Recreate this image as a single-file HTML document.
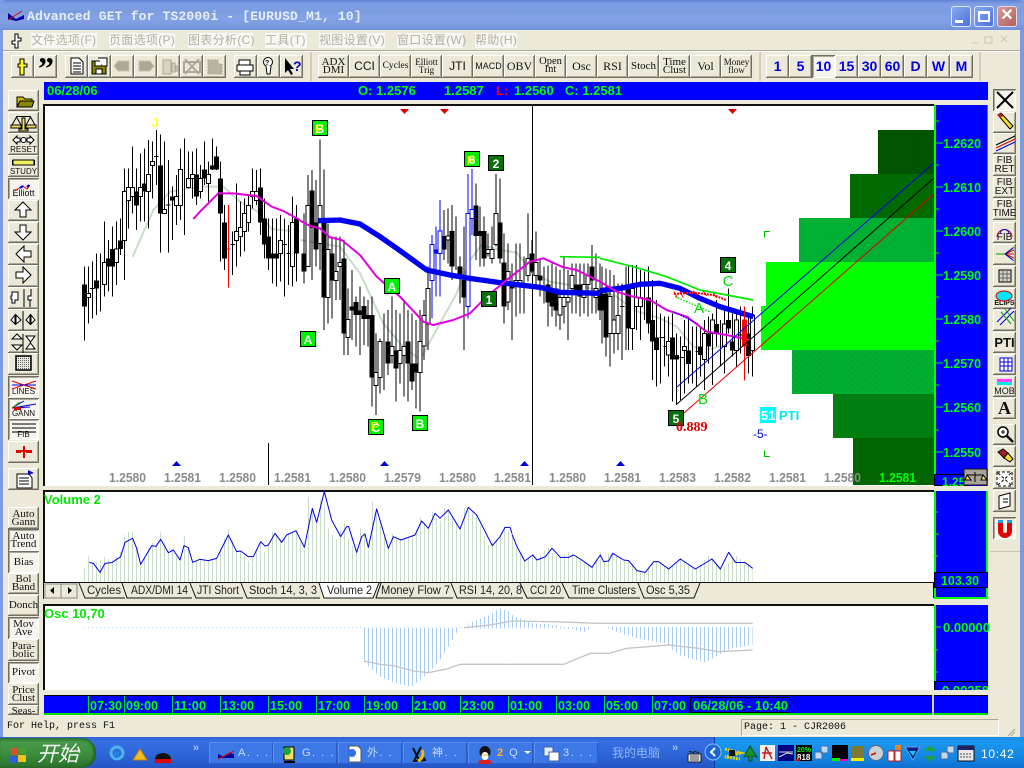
<!DOCTYPE html>
<html><head><meta charset="utf-8"><title>Advanced GET</title>
<style>
html,body{margin:0;padding:0;width:1024px;height:768px;overflow:hidden;background:#ece9d8}
body{position:relative;font-family:"Liberation Sans","Noto Sans CJK SC",sans-serif}
div{position:absolute;box-sizing:border-box}
.b{background:#ece9d8;box-shadow:inset -1px -1px #716f64,inset 1px 1px #fff,inset -2px -2px #aca899;display:flex;align-items:center;justify-content:center;text-align:center;font:10.5px/8px "Liberation Serif",serif;color:#111;white-space:pre-line;padding-bottom:1px}
.p{background:#f6f4ec;box-shadow:inset 1px 1px #716f64,inset -1px -1px #fff,inset 2px 2px #aca899}
.tf{font:bold 14px "Liberation Sans",sans-serif;color:#0000e0}
.m{top:33px;height:15px;font:12px/15px "Liberation Sans","Noto Sans CJK SC",sans-serif;color:#b4b0a0;background:#f8f7f3;white-space:nowrap;letter-spacing:.3px}
.s{font:bold 13px/18px "Liberation Sans",sans-serif;color:#00ff00;top:82px;white-space:nowrap}
.tk{top:742px;height:22px;width:64px;background:#3c78e6;border-radius:2px;box-shadow:inset 1px 1px #5a90f0,inset -1px -1px #2b5cc8;color:#c8dcff;font:11px/22px "Liberation Sans","Noto Sans CJK SC",sans-serif;white-space:nowrap;padding-left:29px;letter-spacing:1.5px}
svg{position:absolute;left:0;top:0}
</style></head><body>
<!-- frame -->
<div style="left:0;top:0;width:1024px;height:738px;background:#7a9be0"></div>
<div style="left:0;top:0;width:1024px;height:30px;background:linear-gradient(#5f83d8 0,#7f9fe4 4px,#7c9ce0 12px,#84a2e6 18px,#7a9ae0 26px,#6f90da 30px);border-radius:6px 6px 0 0"></div>
<div style="left:3px;top:30px;width:1017px;height:707px;background:#ece9d8"></div>
<div style="left:27px;top:8px;font:bold 13px/17px 'Liberation Mono',monospace;color:#e6ecfa;white-space:nowrap;letter-spacing:.17px">Advanced GET for TS2000i - [EURUSD_M1, 10]</div>
<!-- window buttons -->
<div style="left:951px;top:6px;width:20px;height:21px;background:linear-gradient(135deg,#8aa8ee,#4a72dc);border:1px solid #dfe7fa;border-radius:3px"></div>
<div style="left:955px;top:20px;width:8px;height:3px;background:#fff"></div>
<div style="left:974px;top:6px;width:20px;height:21px;background:linear-gradient(135deg,#8aa8ee,#4a72dc);border:1px solid #dfe7fa;border-radius:3px"></div>
<div style="left:978px;top:11px;width:12px;height:11px;border:2px solid #fff;border-top-width:3px"></div>
<div style="left:997px;top:6px;width:20px;height:21px;background:linear-gradient(135deg,#d89a9a,#b06060);border:1px solid #e8dce0;border-radius:3px;color:#fff;font:bold 16px/18px 'Liberation Sans';text-align:center">✕</div>
<!-- menu -->
<div class="m" style="left:31px;width:66px">文件选项(F)</div>
<div class="m" style="left:109px;width:66px">页面选项(P)</div>
<div class="m" style="left:188px;width:65px">图表分析(C)</div>
<div class="m" style="left:265px;width:42px">工具(T)</div>
<div class="m" style="left:319px;width:66px">视图设置(V)</div>
<div class="m" style="left:397px;width:66px">窗口设置(W)</div>
<div class="m" style="left:475px;width:42px">帮助(H)</div>
<div style="left:3px;top:50px;width:1017px;height:1px;background:#aca899"></div>
<div style="left:3px;top:51px;width:1017px;height:1px;background:#fff"></div>
<div style="left:310px;top:52px;width:2px;height:29px;background:#d0ccb8"></div>
<div style="left:759px;top:52px;width:2px;height:29px;background:#d0ccb8"></div>
<div style="left:979px;top:52px;width:2px;height:29px;background:#d0ccb8"></div>
<!-- top toolbar -->
<div class="b" style="left:11px;top:55px;width:23px;height:23px"></div><div class="b" style="left:34px;top:55px;width:23px;height:23px"></div>
<div class="b" style="left:65px;top:55px;width:23px;height:23px"></div><div class="b" style="left:88px;top:55px;width:23px;height:23px"></div>
<div class="b" style="left:111px;top:55px;width:23px;height:23px"></div><div class="b" style="left:134px;top:55px;width:23px;height:23px"></div>
<div class="b" style="left:157px;top:55px;width:23px;height:23px"></div><div class="b" style="left:180px;top:55px;width:23px;height:23px"></div>
<div class="b" style="left:203px;top:55px;width:23px;height:23px"></div>
<div class="b" style="left:234px;top:55px;width:23px;height:23px"></div><div class="b" style="left:257px;top:55px;width:23px;height:23px"></div><div class="b" style="left:280px;top:55px;width:23px;height:23px"></div>
<div class="b" style="left:318px;top:55px;width:31px;height:23px;font-size:11px">ADX
DMI</div>
<div class="b" style="left:349px;top:55px;width:31px;height:23px;font:12px 'Liberation Sans'">CCI</div>
<div class="b" style="left:380px;top:55px;width:31px;height:23px;font-size:9.5px">Cycles</div>
<div class="b" style="left:411px;top:55px;width:31px;height:23px;font-size:9px">Elliott
Trig</div>
<div class="b" style="left:442px;top:55px;width:31px;height:23px;font:12px 'Liberation Sans'">JTI</div>
<div class="b" style="left:473px;top:55px;width:31px;height:23px;font:9px 'Liberation Sans'">MACD</div>
<div class="b" style="left:504px;top:55px;width:31px;height:23px;font:12px 'Liberation Serif'">OBV</div>
<div class="b" style="left:535px;top:55px;width:31px;height:23px">Open
Int</div>
<div class="b" style="left:566px;top:55px;width:31px;height:23px;font:12px 'Liberation Serif'">Osc</div>
<div class="b" style="left:597px;top:55px;width:31px;height:23px;font:12px 'Liberation Serif'">RSI</div>
<div class="b" style="left:628px;top:55px;width:31px;height:23px;font-size:11px">Stoch</div>
<div class="b" style="left:659px;top:55px;width:31px;height:23px;font-size:11px">Time
Clust</div>
<div class="b" style="left:690px;top:55px;width:31px;height:23px;font:12px 'Liberation Serif'">Vol</div>
<div class="b" style="left:721px;top:55px;width:31px;height:23px;font-size:9px">Money
flow</div>
<div class="b tf" style="left:766px;top:55px;width:23px;height:23px">1</div><div class="b tf" style="left:789px;top:55px;width:23px;height:23px">5</div>
<div class="b p tf" style="left:812px;top:55px;width:23px;height:23px">10</div><div class="b tf" style="left:835px;top:55px;width:23px;height:23px">15</div>
<div class="b tf" style="left:858px;top:55px;width:23px;height:23px">30</div><div class="b tf" style="left:881px;top:55px;width:23px;height:23px">60</div>
<div class="b tf" style="left:904px;top:55px;width:23px;height:23px">D</div><div class="b tf" style="left:927px;top:55px;width:23px;height:23px">W</div><div class="b tf" style="left:950px;top:55px;width:23px;height:23px">M</div>
<!-- info bar -->
<div style="left:44px;top:82px;width:944px;height:18px;background:#0000ff"></div>
<div class="s" style="left:47px">06/28/06</div><div class="s" style="left:358px">O: 1.2576</div><div class="s" style="left:444px">1.2587</div>
<div class="s" style="left:496px;color:#ff0000">L:</div><div class="s" style="left:514px">1.2560</div><div class="s" style="left:565px">C: 1.2581</div>
<!-- left buttons -->
<div class="b" style="left:8px;top:90px;width:31px;height:21px"></div><div class="b" style="left:8px;top:112px;width:31px;height:21px"></div>
<div class="b" style="left:8px;top:133px;width:31px;height:22px;align-items:flex-end;font:8px/9px 'Liberation Sans'">RESET</div>
<div class="b" style="left:8px;top:155px;width:31px;height:22px;align-items:flex-end;font:8px/9px 'Liberation Sans'">STUDY</div>
<div class="b p" style="left:8px;top:178px;width:31px;height:21px;align-items:flex-end;font:9px/10px 'Liberation Sans'">Elliott</div>
<div class="b" style="left:8px;top:200px;width:31px;height:21px"></div><div class="b" style="left:8px;top:222px;width:31px;height:21px"></div>
<div class="b" style="left:8px;top:244px;width:31px;height:21px"></div><div class="b" style="left:8px;top:265px;width:31px;height:22px"></div>
<div class="b" style="left:8px;top:287px;width:31px;height:22px"></div><div class="b" style="left:8px;top:309px;width:31px;height:22px"></div>
<div class="b" style="left:8px;top:331px;width:31px;height:22px"></div><div class="b" style="left:8px;top:353px;width:31px;height:22px"></div>
<div class="b p" style="left:8px;top:376px;width:31px;height:21px;align-items:flex-end;font:8px/9px 'Liberation Sans'">LINES</div>
<div class="b p" style="left:8px;top:398px;width:31px;height:21px;align-items:flex-end;font:8px/9px 'Liberation Sans'">GANN</div>
<div class="b p" style="left:8px;top:419px;width:31px;height:21px;align-items:flex-end;font:8px/9px 'Liberation Sans'">FIB</div>
<div class="b" style="left:8px;top:441px;width:31px;height:22px"></div><div class="b" style="left:8px;top:468px;width:31px;height:22px"></div>
<div class="b" style="left:8px;top:507px;width:31px;height:22px;font-size:11px">Auto
Gann</div>
<div class="b p" style="left:8px;top:529px;width:31px;height:22px;font-size:11px">Auto
Trend</div>
<div class="b p" style="left:8px;top:551px;width:31px;height:22px;font-size:11px">Bias</div>
<div class="b" style="left:8px;top:573px;width:31px;height:21px;font-size:11px">Bol
Band</div>
<div class="b" style="left:8px;top:595px;width:31px;height:21px;font-size:11px">Donch</div>
<div class="b p" style="left:8px;top:617px;width:31px;height:22px;font-size:11px">Mov
Ave</div>
<div class="b" style="left:8px;top:639px;width:31px;height:22px;font-size:11px">Para-
bolic</div>
<div class="b p" style="left:8px;top:662px;width:31px;height:21px;font-size:11px">Pivot</div>
<div class="b" style="left:8px;top:683px;width:31px;height:22px;font-size:11px">Price
Clust</div>
<div class="b" style="left:8px;top:705px;width:31px;height:10px;overflow:hidden;align-items:flex-start;padding-top:2px;font-size:11px">Seas-</div>
<!-- right buttons -->
<div class="b p" style="left:993px;top:89px;width:23px;height:22px"></div><div class="b" style="left:993px;top:112px;width:23px;height:21px"></div>
<div class="b" style="left:993px;top:133px;width:23px;height:21px"></div>
<div class="b" style="left:993px;top:155px;width:23px;height:21px;font:10px/9px 'Liberation Sans'">FIB
RET</div>
<div class="b" style="left:993px;top:177px;width:23px;height:21px;font:10px/9px 'Liberation Sans'">FIB
EXT</div>
<div class="b" style="left:993px;top:199px;width:23px;height:21px;font:10px/9px 'Liberation Sans'">FIB
TIME</div>
<div class="b" style="left:993px;top:222px;width:23px;height:21px;font:10px/9px 'Liberation Sans';align-items:flex-end">FIB</div>
<div class="b" style="left:993px;top:244px;width:23px;height:21px"></div><div class="b" style="left:993px;top:266px;width:23px;height:21px"></div>
<div class="b" style="left:993px;top:288px;width:23px;height:21px;font:bold 7px/8px 'Liberation Sans';align-items:flex-end">ELIPS</div>
<div class="b" style="left:993px;top:310px;width:23px;height:21px"></div>
<div class="b" style="left:993px;top:332px;width:23px;height:21px;font:bold 13px 'Liberation Sans'">PTI</div>
<div class="b" style="left:993px;top:354px;width:23px;height:21px"></div>
<div class="b" style="left:993px;top:376px;width:23px;height:21px;font:9px/9px 'Liberation Sans';align-items:flex-end">MOB</div>
<div class="b" style="left:993px;top:398px;width:23px;height:21px;font:bold 18px 'Liberation Serif'">A</div>
<div class="b" style="left:993px;top:424px;width:23px;height:21px"></div><div class="b" style="left:993px;top:446px;width:23px;height:21px"></div>
<div class="b" style="left:993px;top:468px;width:23px;height:21px"></div><div class="b" style="left:993px;top:490px;width:23px;height:22px"></div>
<div class="b p" style="left:993px;top:517px;width:23px;height:22px"></div>
<div style="left:990px;top:551px;width:30px;height:1px;background:#c8c4b0"></div>
<!-- chart backgrounds -->
<div style="left:43px;top:104px;width:891px;height:382px;background:#fff;border-top:2px solid #111;border-left:2px solid #111"></div>
<div style="left:934px;top:105px;width:54px;height:381px;background:#0000ff;border-left:2px solid #00ff00;border-right:1px solid #00c000"></div>
<div style="left:43px;top:490px;width:891px;height:93px;background:#fff;border-top:2px solid #111;border-left:2px solid #111"></div>
<div style="left:934px;top:491px;width:54px;height:108px;background:#0000ff;border:solid #00ff00;border-width:0 2px 2px 2px"></div>
<div style="left:43px;top:604px;width:891px;height:86px;background:#fff;border-top:2px solid #111;border-left:2px solid #111"></div>
<div style="left:934px;top:605px;width:54px;height:85px;background:#0000ff;border-left:2px solid #00ff00"></div>
<div style="left:44px;top:695px;width:944px;height:20px;background:#0000ff;border-top:1px solid #000;border-bottom:2px solid #00e000"></div>
<div style="left:932px;top:695px;width:2px;height:20px;background:#d0d0c0"></div>
<!-- status -->
<div style="left:7px;top:720px;font:10px/14px 'Liberation Mono',monospace;color:#111;white-space:pre">For Help, press F1</div>
<div style="left:741px;top:719px;width:258px;height:17px;border:1px solid #aca899;border-right-color:#fff;border-bottom-color:#fff;font:10px/15px 'Liberation Mono',monospace;color:#111;padding-left:2px;white-space:pre">Page: 1 - CJR2006</div>
<!-- taskbar -->
<div style="left:0;top:737px;width:1024px;height:31px;background:linear-gradient(#2c61d0,#3870e4 12%,#2e66d8 55%,#2455c4)"></div>
<div style="left:714px;top:737px;width:310px;height:31px;background:linear-gradient(#1b8ee6,#1a96ee 20%,#1284e0 70%,#0f6fd0);border-left:1px solid #0a3c9c"></div>
<div style="left:0;top:738px;width:96px;height:30px;background:linear-gradient(#377f37,#46994a 15%,#3a8a3a 60%,#2a722c);border-radius:0 14px 14px 0;box-shadow:inset -2px 0 3px #1f5a22"></div>
<div style="left:37px;top:739px;font:italic 21px/28px 'WenQuanYi Zen Hei','Noto Sans CJK SC',sans-serif;color:#f4f4f4">开始</div>
<div class="tk" style="left:209px">A. . .</div><div class="tk" style="left:273px">G. . .</div><div class="tk" style="left:338px">外. .</div><div class="tk" style="left:403px">神. .</div>
<div class="tk" style="left:468px;width:65px;overflow:hidden"><span style="color:#ffb030;font-weight:bold">2</span> Q</div>
<div class="tk" style="left:534px">3. . .</div>
<div style="left:612px;top:744px;font:12px/18px 'Noto Sans CJK SC',sans-serif;color:#8fb4f0;white-space:nowrap">我的电脑</div>
<div style="left:672px;top:741px;font:bold 11px/14px 'Liberation Sans';color:#9ec0f5">»</div>
<div style="left:193px;top:741px;font:bold 11px/14px 'Liberation Sans';color:#9ec0f5">»</div>
<div style="left:981px;top:745px;font:12px/18px 'Liberation Sans';color:#fff;letter-spacing:.7px">10:42</div>

<svg width="1024" height="768" xmlns="http://www.w3.org/2000/svg" font-family="Liberation Sans">
<defs>
<pattern id="vb" patternUnits="userSpaceOnUse" x="0" width="12" height="12"><rect x="0" width="3" height="12" fill="#c6dcc6"/></pattern>
<pattern id="ob" patternUnits="userSpaceOnUse" x="0" width="12" height="12"><rect x="0" width="3" height="12" fill="#a8ccf4"/></pattern>
<pattern id="d1" patternUnits="userSpaceOnUse" width="7" height="6"><rect width="7" height="6" fill="#00ac30"/><rect x="1" y="1" width="1" height="1" fill="#12b83e"/><rect x="4" y="4" width="1" height="1" fill="#12b83e"/></pattern>
<pattern id="d2" patternUnits="userSpaceOnUse" width="9" height="8"><rect width="9" height="8" fill="#005400"/><rect x="2" y="2" width="1" height="1" fill="#106810"/></pattern>
<pattern id="d3" patternUnits="userSpaceOnUse" width="9" height="8"><rect width="9" height="8" fill="#006a00"/><rect x="2" y="2" width="1" height="1" fill="#107a10"/></pattern>
<pattern id="gd" patternUnits="userSpaceOnUse" width="2" height="2"><rect width="2" height="2" fill="#e8e8e0"/><rect width="1" height="1" fill="#666"/></pattern>
</defs>
<!-- volume profile -->
<rect x="878" y="130" width="56" height="44" fill="url(#d2)"/>
<rect x="850" y="174" width="84" height="44" fill="url(#d3)"/>
<rect x="799" y="218" width="135" height="44" fill="#00b033"/>
<rect x="766" y="262" width="168" height="88" fill="#00ff00"/>
<rect x="761" y="306" width="6" height="44" fill="#00ff00"/>
<rect x="792" y="350" width="142" height="44" fill="url(#d1)"/>
<rect x="833" y="394" width="101" height="44" fill="#007f10"/>
<rect x="853" y="438" width="81" height="47" fill="#006400"/>
<!-- vertical lines -->
<path d="M532.5 105V485M268.5 443V485" stroke="#000" fill="none"/>
<!-- red/blue triangles -->
<path d="M400 109h9l-4.500 5zM440 109h9l-4.500 5zM728 109h9l-4.500 5z" fill="#e00000"/>
<path d="M172 466h9l-4.500-5zM380 466h9l-4.500-5zM520 466h9l-4.500-5zM616 466h9l-4.500-5z" fill="#0000e0"/>

<!-- MA lines underlay: zoom coordinates -->
<g transform="translate(0,85) scale(.33333)" fill="none">
<path d="M398 515L460 375 510 320 600 305 670 305 720 350 770 378 815 432 900 440" stroke="#c8dcc8" stroke-width="6"/>
</g>
<g transform="translate(300,100) scale(.33333)" fill="none">
<path d="M0 420L60 430 120 440 180 520 250 670 300 730 360 780 420 670 470 580 510 480 545 435 600 450 650 458 700 520 750 545 810 555 900 570" stroke="#c8dcc8" stroke-width="6"/>
</g>
<g transform="translate(600,100) scale(.33333)" fill="none">
<path d="M0 570L50 590 100 630 180 655 230 680 280 740 330 748 390 730" stroke="#c8dcc8" stroke-width="6"/>
</g>

<!-- candles -->
<g transform="translate(0,85) scale(.33333)" shape-rendering="crispEdges" fill="none">
<path stroke="#000" stroke-width="3" d="M253 545V767M265 545V715M277 530V700M289 505V690M301 505V680M313 410V635M325 465V620M337 425V635M349 410V600M361 400V510M373 250V585M385 250V430M397 185V385M409 250V435M421 205V410M433 190V410M445 165V430M457 170V340M469 135V300M481 148V503M493 170V385M505 225V503M517 305V465M529 270V420M541 190V405M553 160V450M565 200V310M577 200V340M589 190V360M601 240V340M613 170V300M625 230V350M637 160V255M649 185V255M661 230V530M673 360V555M697 440V570M709 295V545M721 350V515M733 340V500M745 330V440M757 250V370M769 255V360M781 250V450M793 340V520M805 400V555M817 400V595M829 400V605M841 390V590M853 400V635M865 420V600M877 335V605M889 360V590M270 610h14M462 214h14M498 360h14M691 478h14M847 478h14M859 505h14"/>
<path stroke="#000" stroke-width="15" d="M253 598V665M289 586V610M325 520V545M337 492V545M361 466V492M409 320V362M433 295V320M481 241V385M517 334V347M589 268V334M613 253V280M637 241V253M649 214V253M661 280V385M673 412V520M781 308V412M793 400V478M805 454V520M817 505V520M829 505V520M889 400V505"/>
<path stroke="#000" stroke-width="3" fill="#fff" d="M259 625h12V637h-12zM307 532h12V598h-12zM343 492h12V532h-12zM367 320h12V466h-12zM379 308h12V346h-12zM391 308h12V334h-12zM415 308h12V334h-12zM439 268h12V320h-12zM451 229h12V241h-12zM487 373h12V385h-12zM523 334h12V361h-12zM535 253h12V361h-12zM559 280h12V308h-12zM571 268h12V280h-12zM595 280h12V320h-12zM619 268h12V296h-12zM703 440h12V466h-12zM715 428h12V455h-12zM727 385h12V440h-12zM739 361h12V412h-12zM751 320h12V334h-12zM763 320h12V346h-12zM835 466h12V505h-12zM871 412h12V544h-12z"/>
<path stroke="#f00" stroke-width="3" d="M685 360V608M679 492h12"/>
</g>
<g transform="translate(300,100) scale(.33333)" shape-rendering="crispEdges" fill="none">
<path stroke="#000" stroke-width="3" d="M12 340V550M24 225V500M36 210V540M48 240V500M60 118V510M72 208V690M84 370V670M96 410V655M108 410V600M120 410V600M132 420V765M144 565V765M156 510V720M168 590V740M180 560V765M192 590V735M204 600V740M216 590V920M228 700V945M240 715V880M252 640V870M264 630V825M276 590V790M288 630V905M300 640V850M312 605V890M324 630V905M336 640V870M348 660V925M360 630V935M372 600V780M384 500V750M432 330V480M444 325V490M456 315V540M468 350V510M480 470V610M492 380V750M528 250V480M540 320V500M552 350V500M564 400V470M576 380V490M588 222V440M600 235V490M612 400V670M624 430V630M636 490V720M648 430V650M660 430V640M672 470V640M684 340V545M696 420V520M708 395V555M720 480V590M732 500V610M744 497V680M756 490V650M768 500V680M780 510V690M792 470V670M804 510V720M816 490V640M828 490V640M840 490V650M852 490V640M864 490V650M876 435V640M888 460V640M900 490V660"/>
<path stroke="#000" stroke-width="15" d="M12 460V515M36 272V384M48 368V448M72 368V593M96 460V542M132 475V700M156 620V632M168 606V645M180 632V645M192 618V657M204 645V657M216 645V832M264 724V790M288 752V806M324 724V790M336 790V844M348 790V818M432 408V448M456 393V500M480 500V527M492 540V592M528 316V408M540 393V408M552 393V475M600 367V475M612 487V620M636 548V566M696 460V515M720 527V541M744 553V608M756 566V620M768 566V632M828 553V580M840 553V590M876 500V541M900 570V632"/>
<path stroke="#000" stroke-width="3" fill="#fff" d="M18 316h12V500h-12zM54 316h12V430h-12zM78 448h12V593h-12zM102 515h12V542h-12zM114 488h12V500h-12zM138 658h12V712h-12zM222 817h12V856h-12zM234 724h12V832h-12zM270 740h12V766h-12zM294 752h12V790h-12zM306 740h12V766h-12zM354 724h12V818h-12zM366 646h12V738h-12zM378 565h12V672h-12zM438 408h12V420h-12zM558 448h12V460h-12zM570 448h12V475h-12zM582 340h12V433h-12zM618 515h12V606h-12zM642 542h12V553h-12zM654 542h12V553h-12zM678 475h12V527h-12zM702 487h12V527h-12zM774 592h12V645h-12zM786 592h12V620h-12zM798 592h12V606h-12zM810 527h12V566h-12zM846 553h12V592h-12zM858 527h12V553h-12zM882 566h12V592h-12z"/>
<path stroke="#0000f0" stroke-width="3" fill="#fff" d="M396 405V655M408 380V590M420 300V590M504 222V655M516 207V405"/>
<path stroke="#0000f0" stroke-width="3" fill="#fff" d="M390 433h12V541h-12zM414 393h12V460h-12zM498 340h12V620h-12zM510 328h12V355h-12z"/>
<path fill="#0000f0" d="M402 448h12V460h-12z"/>
</g>
<g transform="translate(600,100) scale(.33333)" shape-rendering="crispEdges" fill="none">
<path stroke="#000" stroke-width="3" d="M6 500V730M18 505V770M30 510V800M42 525V760M54 550V750M66 550V780M78 500V750M85 495V750M97 495V750M110 495V690M122 510V720M134 515V660M146 500V700M158 540V840M170 600V860M182 640V850M194 650V800M206 650V830M218 640V905M230 700V915M242 710V900M254 660V880M266 650V850M278 680V850M290 680V860M302 680V830M314 660V870M326 650V790M338 640V855M350 600V740M362 660V800M374 620V820M386 565V700M398 640V770M410 630V800M422 620V760M446 640V820M458 620V830M60 620h14M178 712h14M190 740h14M238 772h14M286 755h14M416 705h14"/>
<path stroke="#000" stroke-width="15" d="M6 580V632M18 580V712M85 565V685M146 592V670M158 660V725M170 712V750M218 712V778M230 765V778M266 752V792M302 740V765M326 700V740M350 672V700M386 660V685M398 725V752M446 700V768"/>
<path stroke="#000" stroke-width="3" fill="#fff" d="M24 590h12V700h-12zM36 660h12V700h-12zM48 646h12V700h-12zM91 565h12V685h-12zM104 592h12V620h-12zM116 592h12V620h-12zM200 725h12V765h-12zM248 740h12V752h-12zM308 700h12V778h-12zM332 660h12V700h-12zM368 672h12V740h-12zM404 660h12V752h-12zM452 646h12V752h-12z"/>
</g>
<!-- MA lines -->
<g transform="translate(300,100) scale(.33333)" fill="none" stroke-linejoin="round">
<path stroke="#0000f0" stroke-width="16" d="M55 362L120 360 180 372 240 410 300 452 380 510 450 525 510 535 600 548 720 562 780 577 900 580"/>
<path stroke="#e000e0" stroke-width="6" d="M0 362L30 378 60 385 90 412 125 420 180 465 230 530 300 590 370 665 400 675 460 660 510 640 560 590 620 540 690 485 730 475 790 502 830 510 900 545"/>
<path stroke="#00e800" stroke-width="5" d="M780 470L900 472"/>
</g>
<g transform="translate(0,85) scale(.33333)" fill="none">
<path stroke="#e000e0" stroke-width="6" d="M580 402L600 380 630 350 655 325 700 325 770 333 815 365 850 378 900 405"/>
</g>
<g transform="translate(600,100) scale(.33333)" fill="none" stroke-linejoin="round">
<path stroke="#0000f0" stroke-width="16" d="M0 572L60 565 120 553 180 550 240 565 300 595 360 620 420 638 460 650"/>
<path stroke="#e000e0" stroke-width="6" d="M0 545L50 575 100 590 150 600 200 630 260 650 320 695 380 705 450 720"/>
<path stroke="#00e800" stroke-width="5" d="M0 475L100 500 200 530 300 570 380 585 460 600"/>
<path stroke="#f00" stroke-width="6" stroke-dasharray="6 3" d="M222 582L280 578 340 585 378 600"/>
<path stroke="#f00" stroke-width="3" d="M222 575l10 18M240 575l10 18M280 572l10 14M310 574l10 14M340 580l10 14"/>
<path stroke="#00e800" stroke-width="4" stroke-dasharray="5 4" d="M225 590L330 635"/>
<path stroke="#0000f0" stroke-width="3" stroke-dasharray="5 3" d="M220 635L295 672"/>
<path stroke="#f00" stroke-width="15" d="M434 658V740" shape-rendering="crispEdges"/>
<path stroke="#f00" stroke-width="3" d="M434 620V842" shape-rendering="crispEdges"/>
</g>
<!-- regression lines -->
<path d="M677 387L934 163" stroke="#0000e0" fill="none"/>
<path d="M677 404L934 178" stroke="#000" fill="none"/>
<path d="M676 420L934 194" stroke="#e00000" fill="none"/>
<!-- label boxes -->
<g font-weight="bold" font-size="12" text-anchor="middle" fill="#fff" stroke-width="1">
<g stroke="#000"><rect x="300.500" y="331.500" width="15" height="15" fill="#00f000"/><rect x="384.500" y="278.500" width="15" height="15" fill="#00f000"/><rect x="312.500" y="120.500" width="15" height="15" fill="#00f000"/><rect x="368.500" y="419.500" width="15" height="15" fill="#00f000"/><rect x="412.500" y="415.500" width="15" height="15" fill="#00f000"/><rect x="464.500" y="151.500" width="15" height="15" fill="#00f000"/><rect x="488.500" y="155.500" width="15" height="15" fill="#0a700a"/><rect x="481.500" y="291.500" width="15" height="15" fill="#0a700a"/><rect x="720.500" y="257.500" width="15" height="15" fill="#0a700a"/><rect x="668.500" y="410.500" width="15" height="15" fill="#0a700a"/></g>
<text x="308" y="344">A</text><text x="392" y="291">A</text><text x="320" y="133">B</text><text x="376" y="432">C</text><text x="420" y="428">B</text><text x="472" y="164">6</text><text x="496" y="168">2</text><text x="489" y="304">1</text><text x="728" y="270">4</text><text x="676" y="423">5</text>
<g fill="#ffff00" font-weight="normal" font-size="13"><text x="155" y="127" stroke="none">J</text><text x="319" y="134">P</text><text x="375" y="431">P</text><text x="471" y="165">P</text></g>
<g fill="#00e000" font-weight="normal" font-size="15"><text x="728" y="286">C</text><text x="699" y="313">A</text><text x="703" y="404">B</text></g>
</g>
<text x="676" y="431" fill="#e00000" font-family="Liberation Serif" font-weight="bold" font-size="14">0.889</text>
<rect x="760" y="407" width="16" height="16" fill="#00ffff"/>
<text x="761" y="420" fill="#fff" font-weight="bold" font-size="13">51</text>
<text x="779" y="420" fill="#00e8e8" font-weight="bold" font-size="13">PTI</text>
<text x="753" y="438" fill="#0000d0" font-size="12">-5-</text>
<path d="M770 231.500h-5.500v6M770 456.500h-5.500v-6" stroke="#00c000" fill="none"/>
<!-- bottom price labels -->
<g font-weight="bold" font-size="13" fill="#8a8a8a">
<text x="109" y="482" textLength="37" lengthAdjust="spacingAndGlyphs">1.2580</text><text x="164" y="482" textLength="37" lengthAdjust="spacingAndGlyphs">1.2581</text><text x="219" y="482" textLength="37" lengthAdjust="spacingAndGlyphs">1.2580</text><text x="274" y="482" textLength="37" lengthAdjust="spacingAndGlyphs">1.2581</text><text x="329" y="482" textLength="37" lengthAdjust="spacingAndGlyphs">1.2580</text><text x="384" y="482" textLength="37" lengthAdjust="spacingAndGlyphs">1.2579</text><text x="439" y="482" textLength="37" lengthAdjust="spacingAndGlyphs">1.2580</text><text x="494" y="482" textLength="37" lengthAdjust="spacingAndGlyphs">1.2581</text><text x="549" y="482" textLength="37" lengthAdjust="spacingAndGlyphs">1.2580</text><text x="604" y="482" textLength="37" lengthAdjust="spacingAndGlyphs">1.2581</text><text x="659" y="482" textLength="37" lengthAdjust="spacingAndGlyphs">1.2583</text><text x="714" y="482" textLength="37" lengthAdjust="spacingAndGlyphs">1.2582</text><text x="769" y="482" textLength="37" lengthAdjust="spacingAndGlyphs">1.2581</text><text x="824" y="482" textLength="37" lengthAdjust="spacingAndGlyphs">1.2580</text><text x="879" y="482" textLength="37" lengthAdjust="spacingAndGlyphs" fill="#00ff00">1.2581</text>
</g>
<!-- right axis labels -->
<g font-weight="bold" font-size="13" fill="#00ff00">
<text x="943" y="148" textLength="38" lengthAdjust="spacingAndGlyphs">1.2620</text><text x="943" y="192" textLength="38" lengthAdjust="spacingAndGlyphs">1.2610</text><text x="943" y="236" textLength="38" lengthAdjust="spacingAndGlyphs">1.2600</text><text x="943" y="280" textLength="38" lengthAdjust="spacingAndGlyphs">1.2590</text><text x="943" y="324" textLength="38" lengthAdjust="spacingAndGlyphs">1.2580</text><text x="943" y="368" textLength="38" lengthAdjust="spacingAndGlyphs">1.2570</text><text x="943" y="412" textLength="38" lengthAdjust="spacingAndGlyphs">1.2560</text><text x="943" y="457" textLength="38" lengthAdjust="spacingAndGlyphs">1.2550</text>
</g>
<path d="M936 143h7M936 187h7M936 231h7M936 275h7M936 319h7M936 363h7M936 407h7M936 452h7M936 121h3M936 165h3M936 209h3M936 253h3M936 297h3M936 341h3M936 385h3M936 430h3M936 534h3M936 512h2M936 556h2M936 627h5M936 650h2M936 672h2" stroke="#00ff00" fill="none"/>
<rect x="934.500" y="474.500" width="32" height="11" fill="#0000ff" stroke="#000"/>
<text x="942" y="486" font-weight="bold" font-size="12" fill="#00ff00">1.25</text>
<rect x="964" y="469" width="23" height="16" fill="#a8a498" stroke="#111"/>
<path d="M967 475h16M975 472v10M967 475l-2 5h6zM983 475l-2 5h6z" stroke="#000" fill="#f0e060"/>

<!-- Volume panel -->
<g transform="translate(0,485) scale(.33333)" shape-rendering="crispEdges">
<path fill="url(#vb)" d="M252 292V255L265 212 280 235 300 225 315 215 335 230 362 200 375 142 398 140 410 190 422 238 455 170 468 184 482 140 505 203 520 195 540 235 552 150 565 188 578 232 600 220 625 227 650 220 685 132 710 200 722 198 745 228 760 215 782 170 795 205 805 180 818 138 845 172 860 150 888 135 913 197 925 32 950 112 966 18 985 130 1010 165 1033 108 1046 165 1070 202 1080 128 1095 147 1105 205 1117 48 1165 190 1177 145 1203 165 1245 150 1261 96 1285 130 1297 80 1320 112 1333 68 1357 90 1380 132 1393 68 1430 90 1465 182 1500 155 1513 127 1536 145V292z"/>
</g>
<g transform="translate(512,485) scale(.33333)" shape-rendering="crispEdges">
<path fill="url(#vb)" d="M0 292V148L15 195 38 228 62 210 75 225 108 182 120 205 145 217 170 200 205 222 240 247 265 200 275 230 290 205 302 205 335 225 350 227 375 257 400 262 425 230 440 230 470 252 505 222 550 252 590 212 625 252 660 225 672 212 700 233 722 250V292z"/>
</g>
<g transform="translate(0,485) scale(.33333)" fill="none"><path stroke="#0000e0" stroke-width="3" stroke-linejoin="round" d="M268 232L280 235 300 262 315 235 335 233 362 215 375 172 398 160 410 190 422 238 455 182 468 184 482 163 505 203 520 195 540 225 552 182 565 188 578 232 600 223 625 227 650 220 685 150 710 200 722 198 745 215 760 215 782 170 795 183 805 180 825 145 845 172 860 150 888 137 913 187 937 70 950 112 973 20 995 105 1022 155 1040 125 1046 125 1070 202 1085 155 1095 147 1105 187 1130 72 1165 190 1180 155 1203 165 1245 150 1265 108 1285 130 1305 85 1320 100 1345 75 1380 132 1405 67 1430 90 1477 182 1500 155 1515 127 1530 127 1536 145"/></g>
<g transform="translate(512,485) scale(.33333)" fill="none"><path stroke="#0000e0" stroke-width="3" stroke-linejoin="round" d="M0 148L15 185 38 228 62 210 75 225 100 215 120 190 145 217 170 217 185 210 205 222 240 247 265 210 275 230 290 228 302 205 335 225 350 227 375 257 400 262 425 230 440 230 470 252 505 222 550 252 600 222 625 252 650 202 670 232 700 233 722 250"/></g>
<text x="44" y="504" font-weight="bold" font-size="13" fill="#00e800">Volume 2</text>
<!-- Tabs -->
<rect x="45" y="583" width="888" height="15" fill="#ece9d8"/>
<path d="M44 582.500H933.500V598" stroke="#111" fill="none"/>
<path d="M43.500 583V599" stroke="#111"/>
<rect x="45" y="584" width="16" height="14" fill="#ece9d8" stroke="#888"/><rect x="61" y="584" width="16" height="14" fill="#ece9d8" stroke="#888"/>
<path d="M54 587v7l-4-3.500zM68 587v7l4-3.500z" fill="#000"/>
<path d="M319 583L324 598H373L379 583z" fill="#fff"/>
<path d="M79 583L85 598H125M122 583L127 598H192M190 583L196 598H243M241 583L247 598H320M319 583L324 598H373L379 583M381 583L376 598H453M451 583L457 598H523M520 583L527 598H564M562 583L569 598H640M638 583L644 598H694L700 583" stroke="#111" fill="none"/>
<g font-size="11.500" fill="#222">
<text x="87" y="594" textLength="34" lengthAdjust="spacingAndGlyphs">Cycles</text><text x="131" y="594" textLength="57" lengthAdjust="spacingAndGlyphs">ADX/DMI 14</text><text x="197" y="594" textLength="42" lengthAdjust="spacingAndGlyphs">JTI Short</text><text x="249" y="594" textLength="68" lengthAdjust="spacingAndGlyphs">Stoch 14, 3, 3</text><text x="327" y="594" textLength="45" lengthAdjust="spacingAndGlyphs">Volume 2</text><text x="381" y="594" textLength="69" lengthAdjust="spacingAndGlyphs">Money Flow 7</text><text x="459" y="594" textLength="63" lengthAdjust="spacingAndGlyphs">RSI 14, 20, 8</text><text x="530" y="594" textLength="31" lengthAdjust="spacingAndGlyphs">CCI 20</text><text x="572" y="594" textLength="64" lengthAdjust="spacingAndGlyphs">Time Clusters</text><text x="646" y="594" textLength="44" lengthAdjust="spacingAndGlyphs">Osc 5,35</text>
</g>
<rect x="934.500" y="572.500" width="53" height="15" fill="#0000ff" stroke="#000"/>
<text x="941" y="585" font-weight="bold" font-size="13" fill="#00ff00" textLength="38" lengthAdjust="spacingAndGlyphs">103.30</text>

<!-- Osc panel -->
<g transform="translate(0,485) scale(.33333)" shape-rendering="crispEdges">
<path fill="url(#ob)" d="M1092 427V530L1140 575 1200 598 1235 605 1285 565 1320 525 1345 485 1375 435 1385 427zM1405 430V415L1465 392 1500 370 1536 380V430z"/>
<path d="M252 427H1090" stroke="#b4d0f0" stroke-width="3" stroke-dasharray="3 9"/>
</g>
<g transform="translate(512,485) scale(.33333)" shape-rendering="crispEdges">
<path fill="url(#ob)" d="M0 430V390L60 415 130 420 180 432 240 428H0zM0 430H150L180 432 215 442 240 426H280L340 450 400 465 460 475 500 510 580 533 620 510 660 490 722 480V426H240L0 426z"/>
</g>
<g transform="translate(0,485) scale(.33333)" fill="none" stroke="#c4c4c4" stroke-width="4"><path d="M1092 528L1140 538 1180 542 1240 558 1285 563 1340 552 1380 538 1536 538M1392 428L1470 420 1536 408"/></g>
<g transform="translate(512,485) scale(.33333)" fill="none" stroke="#c4c4c4" stroke-width="4"><path d="M0 538L155 538 235 505 290 505 345 490 470 480 560 490 620 500 722 495M0 408L120 410 260 415 722 415"/></g>
<text x="44" y="618" font-weight="bold" font-size="13" fill="#00e800">Osc 10,70</text>
<text x="943" y="632" font-weight="bold" font-size="13" fill="#00ff00">0.00000</text>
<rect x="934.500" y="681.500" width="53" height="9" fill="#0000ff" stroke="#000"/>
<svg x="935" y="682" width="53" height="8"><text x="7" y="13" font-weight="bold" font-size="13" fill="#00ff00">0.00258</text></svg>
<rect x="44" y="690" width="890" height="5" fill="#ece9d8"/>
<rect x="934" y="690" width="54" height="5" fill="#ece9d8"/>
<!-- Time labels -->
<path d="M88.500 696V713M124.500 696V713M172.500 696V713M220.500 696V713M268.500 696V713M316.500 696V713M364.500 696V713M412.500 696V713M460.500 696V713M508.500 696V713M556.500 696V713M604.500 696V713M652.500 696V713" stroke="#00e000"/>
<g font-weight="bold" font-size="13" fill="#00ff00">
<text x="90" y="710" textLength="32" lengthAdjust="spacingAndGlyphs">07:30</text><text x="126" y="710" textLength="32" lengthAdjust="spacingAndGlyphs">09:00</text><text x="174" y="710" textLength="32" lengthAdjust="spacingAndGlyphs">11:00</text><text x="222" y="710" textLength="32" lengthAdjust="spacingAndGlyphs">13:00</text><text x="270" y="710" textLength="32" lengthAdjust="spacingAndGlyphs">15:00</text><text x="318" y="710" textLength="32" lengthAdjust="spacingAndGlyphs">17:00</text><text x="366" y="710" textLength="32" lengthAdjust="spacingAndGlyphs">19:00</text><text x="414" y="710" textLength="32" lengthAdjust="spacingAndGlyphs">21:00</text><text x="462" y="710" textLength="32" lengthAdjust="spacingAndGlyphs">23:00</text><text x="510" y="710" textLength="32" lengthAdjust="spacingAndGlyphs">01:00</text><text x="558" y="710" textLength="32" lengthAdjust="spacingAndGlyphs">03:00</text><text x="606" y="710" textLength="32" lengthAdjust="spacingAndGlyphs">05:00</text><text x="654" y="710" textLength="32" lengthAdjust="spacingAndGlyphs">07:00</text>
<text x="693" y="710" textLength="95" lengthAdjust="spacingAndGlyphs">06/28/06 - 10:40</text></g>
<rect x="690.500" y="697.500" width="99" height="15" fill="none" stroke="#000"/>

<!-- top toolbar icons -->
<path d="M20 59h4v5h3v3h-3v8h-4v-8h-2v-3h2z" fill="#ffff20" stroke="#000"/>
<path d="M15 36h3v4h3v3h-3v7h-3v-4h-3v-3h3z" fill="#fff" stroke="#000" transform="translate(0,-2)"/>
<text x="38" y="79" font-family="Liberation Serif" font-weight="bold" font-size="32" fill="#000">”</text>
<path d="M71 58h8l4 4v12H71zM73 63h8M73 66h8M73 69h8M73 72h8" fill="#fff" stroke="#000"/>
<path d="M92 61h14v13H92z" fill="#888800" stroke="#000"/><path d="M95 61h7v5h-7zM96 69h6v5h-6z" fill="#fff" stroke="#000"/><path d="M98 58h9v8h-4" fill="#fff" stroke="#000"/>
<path d="M118 61l-4 5 4 5h11V61z" fill="#aca899" stroke="#c8c4b0"/>
<path d="M150 61l4 5-4 5h-11V61z" fill="#aca899" stroke="#c8c4b0"/>
<path d="M163 60h8v14h-8zM172 63h3v9h-3zM176 66h2v5h-2z" fill="#d8d4c4" stroke="#aca899"/>
<path d="M185 59l14 15M199 59l-14 15M184 62h16v10h-16z" fill="none" stroke="#aca899" stroke-width="2"/>
<path d="M208 60h10v4h4v10h-14z" fill="#b8b4a4" stroke="#aca899" stroke-dasharray="2 1"/>
<path d="M239 60h11v5h-11zM237 65h16v6h-16zM240 71h10v4h-10z" fill="#fff" stroke="#000"/>
<circle cx="268" cy="62" r="4.500" fill="#fff" stroke="#000"/><path d="M266 66l1 8h3l1-8" fill="#fff" stroke="#000"/><text x="265" y="65" font-size="7" font-weight="bold">?</text>
<path d="M285 58v15l3-3 3 5 2-1-3-5h4z" fill="#000"/><text x="293" y="71" fill="#0000c0" font-weight="bold" font-size="14">?</text>
<!-- left icons -->
<path d="M17 97h6l2 2h7v8H17z" fill="#ccbb00" stroke="#000"/><path d="M17 107l3-6h14l-2 6z" fill="#888800" stroke="#000"/>
<path d="M12 125l4.500-8 4.500 8M26 125l4.500-8 4.500 8M16.500 116.500h14" fill="none" stroke="#000"/><path d="M11 125h10v3H11zM26 125h10v3H26z" fill="#f0e060" stroke="#000"/><path d="M22 118h3v11h3v2h-9v-2h3z" fill="#f0e060" stroke="#000"/>
<path d="M13 140l4-4v2h3v4h-3v2zM34 140l-4-4v2h-3v4h3v2z" fill="#fff" stroke="#000"/><circle cx="23.500" cy="140" r="2.500" fill="#fff" stroke="#000"/>
<path d="M13 160v5M34 160v5" stroke="#000" stroke-width="2"/><rect x="13" y="160" width="21" height="5" fill="#f0f060" stroke="#000"/>
<path d="M15 191l4-3 4-2 4 3 3-4" fill="none" stroke="#e00000"/><path d="M20 188l3-2M27 187l2-2" stroke="#0000e0" stroke-width="2"/>
<path d="M23 202l8 8h-5v7h-6v-7h-5z" fill="#fff" stroke="#000"/>
<path d="M23 240l8-8h-5v-7h-6v7h-5z" fill="#fff" stroke="#000"/>
<path d="M16 254l8-8v5h7v6h-7v5z" fill="#fff" stroke="#000"/>
<path d="M31 275l-8-8v5h-7v6h7v5z" fill="#fff" stroke="#000"/>
<path d="M12 292h6v8h-3v3h-3v-4h-1v-3h1zM24 289v18M31 289v7h-3v4h4M30 300v7" fill="#fff" stroke="#000"/>
<path d="M23 311v19M21 320l-5-5v9zM26 320l4-5v9zM11 320l4-5v9zM35 320l-4-5v9z" fill="#fff" stroke="#000"/>
<path d="M23 334v19M12 339l5-5 5 5zM12 345l5 5 5-5zM26 336h9l-4.500 6zM26 349h9l-4.500-6z" fill="#fff" stroke="#000"/>
<rect x="16" y="356" width="15" height="14" fill="url(#gd)" stroke="#000" stroke-width="1.500"/>
<path d="M12 381l24 8M36 381l-24 8" stroke="#e00000"/><path d="M12 385l24 0" stroke="#0000e0"/>
<path d="M12 408l12-7M12 408l24-4M12 408l18-1" stroke="#0000d0"/><path d="M12 408l8-6" stroke="#00a000"/><path d="M14 407h7v3h-7z" fill="#e00000"/>
<path d="M12 424h24M12 428h24M12 432h24" stroke="#000"/>
<path d="M24 446v12M16 451h16" stroke="#e00000" stroke-width="2"/><path d="M16 452h5M26 452h6" stroke="#e00000" stroke-width="2"/>
<path d="M17 474h12l3 4v10H17z" fill="#fff" stroke="#000"/><path d="M19 478h10M19 481h10M19 484h10" stroke="#000"/><path d="M28 470l6 3-6 2z" fill="#0000c0"/>
<!-- right icons -->
<path d="M997 92l16 16M1013 92l-16 16" stroke="#000" stroke-width="2"/>
<path d="M998 115l3-2 12 13-3 3z" fill="#f0e020" stroke="#000"/><path d="M998 115l3-2 2 3-3 2z" fill="#c02020"/>
<path d="M996 148l19-9" stroke="#e00000"/><path d="M996 145l19-9" stroke="#000"/><path d="M996 151l19-9" stroke="#0000e0"/>
<path d="M997 237a7.500 7.500 0 0 1 15 0" fill="none" stroke="#e00000"/><path d="M1000 234a4.500 4.500 0 0 1 9 0" fill="none" stroke="#0000e0"/>
<path d="M996 254l9 0M1005 254l9-7M1005 254l9 7" stroke="#00a000"/><path d="M1005 254l9-4M1005 254l9 4M1005 254l9 0" stroke="#e00000"/><path d="M1005 254l8-6M1005 254l8 6" stroke="#0000e0"/>
<rect x="999" y="270" width="12" height="12" fill="#d8d4c8" stroke="#000"/><path d="M1003 270v12M1007 270v12M999 274h12M999 278h12" stroke="#666"/>
<ellipse cx="1004" cy="296" rx="8" ry="5" fill="#00e8ff" stroke="#e00000"/>
<path d="M997 322l14-14M1000 325l14-14" stroke="#0000d0"/><path d="M1001 312l10 12M1005 309l9 12" stroke="#00a000"/>
<rect x="1000" y="358" width="12" height="13" fill="#fff" stroke="#0000e0"/><path d="M1004 358v13M1008 358v13M1000 362h12M1000 366h12" stroke="#0000e0"/>
<rect x="997" y="379" width="15" height="3" fill="#ff40ff"/><rect x="997" y="382" width="15" height="3" fill="#00e8e8"/>
<circle cx="1003" cy="432" r="5" fill="#fff" stroke="#000" stroke-width="1.500"/><path d="M1007 436l6 6" stroke="#000" stroke-width="2.500"/><path d="M1003 430v4M1001 432h4" stroke="#000"/>
<path d="M998 452l5-3 5 4-4 5z" fill="#a02020" stroke="#000"/><path d="M1004 458l4-5 5 6-3 3z" fill="#f0e020" stroke="#000"/>
<rect x="997" y="472" width="15" height="14" fill="#fff" stroke="#000" stroke-dasharray="3 2"/><path d="M998 473l13 12M1011 473l-13 12" stroke="#000" stroke-dasharray="3 2"/>
<path d="M999 496l11-3v13l-11 3zM1003 499h5M1003 502h5" fill="#fff" stroke="#000"/>
<path d="M998 520h5v11a2 2 0 0 0 4 0v-11h5v11a7 7 0 0 1-14 0z" fill="#e00000"/><path d="M998 520h5v3h-5zM1007 520h5v3h-5z" fill="#20a0e0"/>
<!-- mdi faint -->
<path d="M972 43h6M985 37h7v6h-7zM1001 36l6 6M1007 36l-6 6" stroke="#c8c8c0" fill="none"/>
<path d="M1008 736l7-7M1011 736l4-4" stroke="#aca899"/>
<!-- title logo -->
<path d="M8 13l8 6 8-4v4l-8 2-8-2z" fill="#0000a0"/><path d="M8 20l14-9" stroke="#e00000"/>
<!-- taskbar icons -->
<g>
<rect x="11" y="748" width="7" height="7" fill="#e05020"/><rect x="19" y="747" width="7" height="7" fill="#40a030"/><rect x="10" y="756" width="7" height="7" fill="#3060d8"/><rect x="18" y="755" width="8" height="7" fill="#f0c020"/>
<circle cx="117" cy="753" r="6" fill="none" stroke="#50b0f0" stroke-width="3"/><text x="113" y="758" font-weight="bold" font-size="12" font-style="italic" fill="#2090e0">e</text>
<path d="M133 760l7-11 7 11z" fill="#f0c020" stroke="#c08010"/><path d="M155 759a8 6 0 0 1 16 0z" fill="#111"/><rect x="155" y="759" width="16" height="4" fill="#e00000"/>
<path d="M218 754l6 3 5-4 5 1v4h-16z" fill="#0000a0"/><path d="M218 759l16-8" stroke="#e00000"/>
<rect x="284" y="747" width="10" height="13" fill="#f0e060" stroke="#000"/><circle cx="287" cy="751" r="4" fill="#20a040"/><path d="M284 762h11" stroke="#000" stroke-width="2"/>
<path d="M349 746h9l3 3v13h-12z" fill="#fff" stroke="#555"/><circle cx="352" cy="753" r="4" fill="#3070e0"/>
<path d="M413 748l6 12 6-2M421 747l-7 14 12-1" fill="none" stroke="#111" stroke-width="2"/><path d="M422 750a8 8 0 0 1-4 11" fill="none" stroke="#f0c000" stroke-width="3"/>
<ellipse cx="485" cy="752" rx="5.500" ry="6" fill="#111"/><ellipse cx="485" cy="756" rx="3.500" ry="4" fill="#fff"/><path d="M480 760h10l2 2-2 2h-10l-2-2z" fill="#e02020"/><path d="M482 755h6" stroke="#f0b020"/>
<path d="M544 747h9v9h-9z" fill="#e8f0ff" stroke="#4060a0"/><path d="M549 752h10v9h-10z" fill="#fff" stroke="#4060a0"/>
<path d="M524 751h7l-3.500 3z" fill="#fff"/>
<rect x="688" y="754" width="13" height="8" fill="#e8e8e8" stroke="#222"/><path d="M689 752c2-2 3 2 5 0s3 2 5 0" fill="none" stroke="#222"/><path d="M690 756h9M690 758h9M690 760h9" stroke="#555"/>
<circle cx="713" cy="752" r="8" fill="#1a66d8" stroke="#8ac0f4"/><path d="M715 748l-4 4 4 4" fill="none" stroke="#fff" stroke-width="2"/>
<path d="M725 749l15 4-15 4 15 2" stroke="#e8d000" stroke-width="3" fill="none" stroke-dasharray="2 1"/><rect x="729" y="750" width="6" height="6" fill="#111"/>
<path d="M750 746l-6 11 5-1v5h3v-5l5 1z" fill="#1a9030" stroke="#0a5020"/>
<rect x="760" y="745" width="15" height="16" fill="#f4f0f0"/><path d="M766 747l-2 12M766 747l6 12M762 753h10" stroke="#c02020" stroke-width="1.500" fill="none"/>
<rect x="778" y="745" width="16" height="16" fill="#000080"/><path d="M779 752h14M779 757l8-4 6 1" stroke="#ddd" fill="none"/>
<rect x="796" y="745" width="16" height="16" fill="#000"/><text x="797" y="752" font-size="7" font-weight="bold" fill="#00ff00">20%</text><text x="797" y="760" font-size="8" font-weight="bold" fill="#fff">818</text><rect x="796" y="759" width="4" height="2" fill="#e00000"/>
<path d="M821 746h7v7h-7zM815 752h7v7h-7z" fill="#c0d8f0" stroke="#4070b0"/>
<rect x="832" y="745" width="16" height="16" fill="#000"/><rect x="832" y="758" width="8" height="3" fill="#00f000"/><rect x="840" y="759" width="8" height="2" fill="#f000c0"/>
<rect x="851" y="746" width="13" height="12" fill="#807830"/><rect x="851" y="758" width="13" height="3" fill="#f0f000"/>
<circle cx="876" cy="753" r="7.500" fill="#c8d0d8" stroke="#667"/><path d="M876 753l-5 2" stroke="#e00000" stroke-width="1.500"/>
<path d="M888 751h6v10h-6zM895 751h6v10h-6z" fill="#fff" stroke="#c02020"/><rect x="895" y="745" width="6" height="5" fill="#f08020"/>
<path d="M905 747h15l-7 13z" fill="#102080" stroke="#60a0f0"/><path d="M909 751h7l-3 5z" fill="#20c0f0"/>
<path d="M930 745l6 6h-12zM930 762l6-6h-12z" fill="#20a040"/>
<path d="M947 746h7v7h-7zM941 752h7v7h-7z" fill="#c0d8f0" stroke="#4070b0"/>
<rect x="958" y="746" width="16" height="15" fill="#e8e8e8" stroke="#111"/><rect x="958" y="746" width="16" height="4" fill="#202060"/><path d="M960 754h12M960 757h12" stroke="#555" stroke-dasharray="2 1"/>
</g>
</svg>
</body></html>
